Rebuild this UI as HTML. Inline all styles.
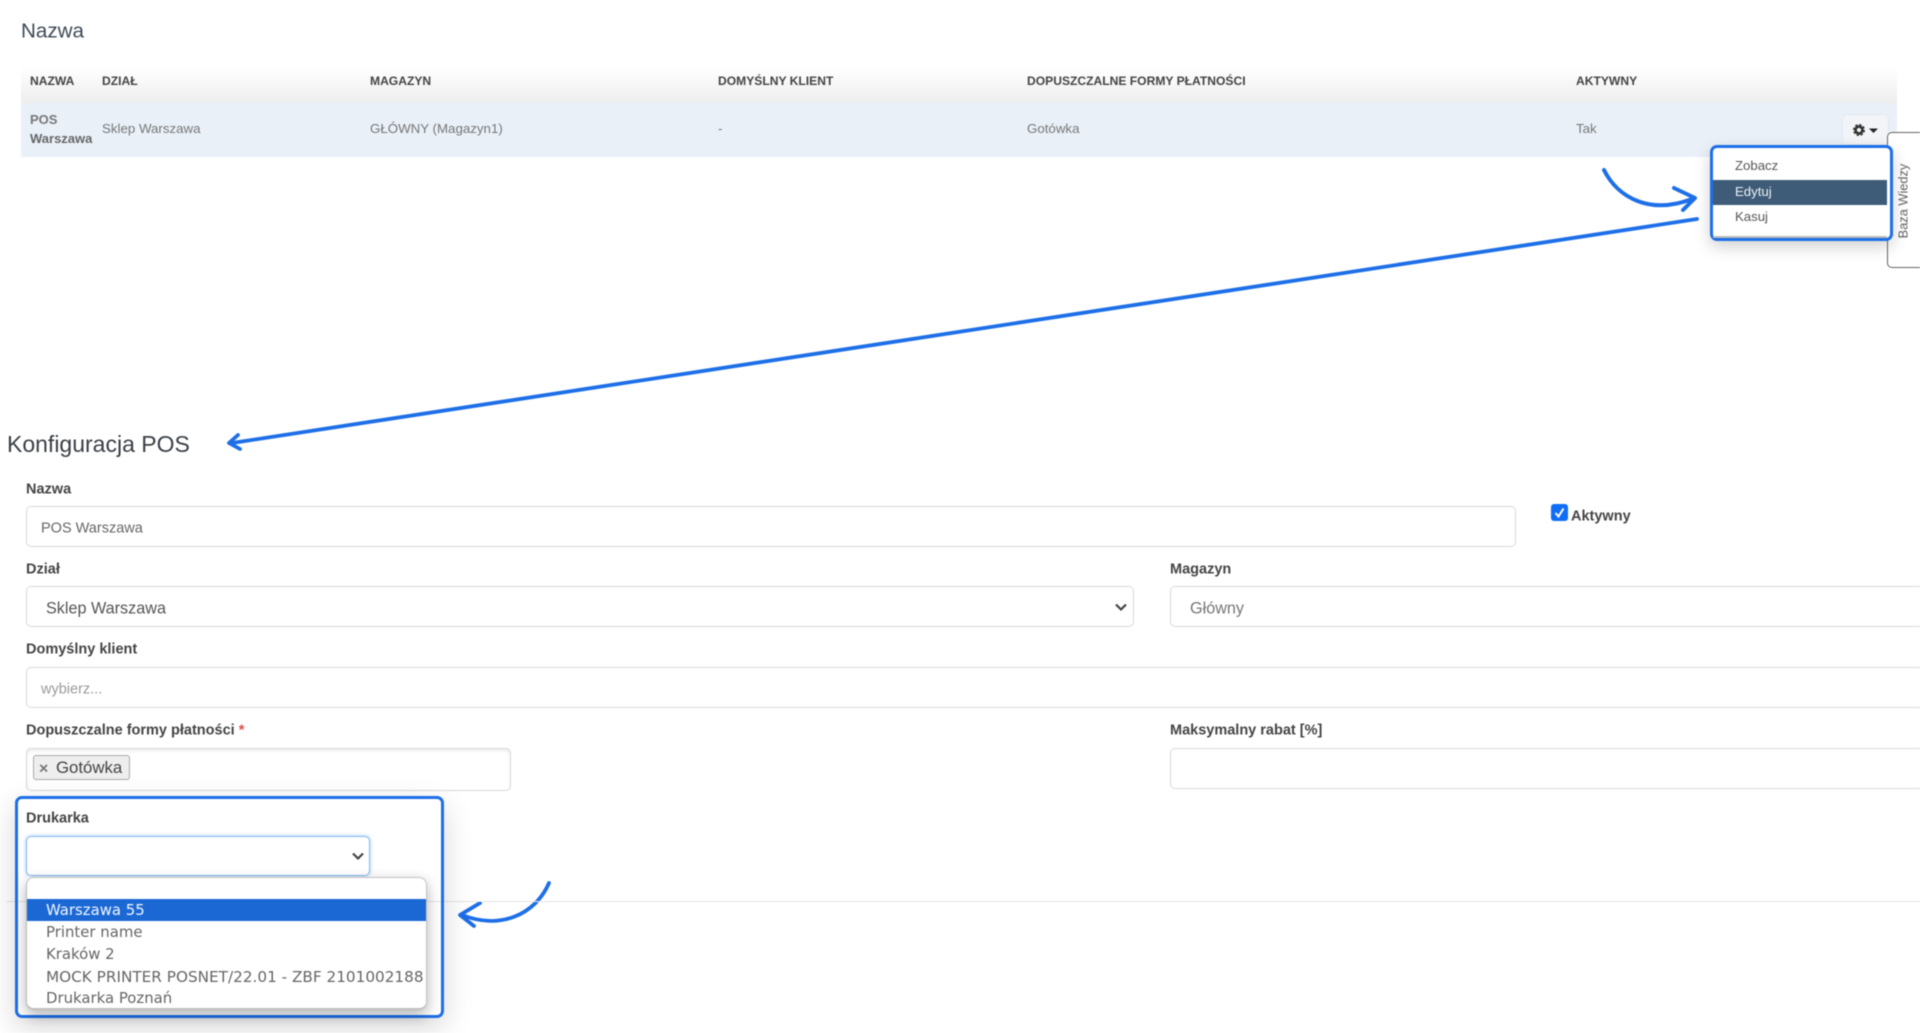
<!DOCTYPE html>
<html lang="pl">
<head>
<meta charset="utf-8">
<title>Konfiguracja POS</title>
<style>
html,body{margin:0;padding:0;background:#fff;width:1920px;height:1033px;overflow:hidden}
#p{position:relative;width:1920px;height:1033px;overflow:hidden;font-family:"Liberation Sans",sans-serif;filter:blur(.4px)}
#p div,#p svg{position:absolute}
.t{white-space:nowrap;transform:translateY(-50%);line-height:1.2}
.h{font-size:12.1px;font-weight:700;color:#444;top:81px}
.c{font-size:13.3px;color:#777;top:129px}
.l{font-size:14.5px;font-weight:700;color:#444}
.i{border:1.5px solid #d9d9d9;border-radius:5px;background:#fff;box-sizing:border-box}
.m{font-size:13.2px;color:#555;left:1735px}
.o{font-family:"DejaVu Sans",sans-serif;font-size:14.9px;color:#666;left:46px}
</style>
</head>
<body>
<div id="p">
  <div class="t" style="left:21px;top:32px;font-size:20.6px;color:#3f4a55">Nazwa</div>

  <div style="left:21px;top:67px;width:1876px;height:36px;background:linear-gradient(#fff,#ededed)"></div>
  <div style="left:21px;top:103px;width:1876px;height:54px;background:#e9f0f8"></div>
  <div class="t h" style="left:30px">NAZWA</div>
  <div class="t h" style="left:102px">DZIAŁ</div>
  <div class="t h" style="left:370px">MAGAZYN</div>
  <div class="t h" style="left:718px">DOMYŚLNY KLIENT</div>
  <div class="t h" style="left:1027px">DOPUSZCZALNE FORMY PŁATNOŚCI</div>
  <div class="t h" style="left:1576px">AKTYWNY</div>
  <div class="t" style="left:30px;top:120px;font-size:13px;font-weight:700;color:#777">POS</div>
  <div class="t" style="left:30px;top:139px;font-size:13px;font-weight:700;color:#666">Warszawa</div>
  <div class="t c" style="left:102px">Sklep Warszawa</div>
  <div class="t c" style="left:370px">GŁÓWNY (Magazyn1)</div>
  <div class="t c" style="left:718px">-</div>
  <div class="t c" style="left:1027px">Gotówka</div>
  <div class="t c" style="left:1576px">Tak</div>

  <div style="left:1843px;top:115px;width:45px;height:29px;background:#f2f4f7;border-radius:4px;box-shadow:0 0 2px rgba(0,0,0,.08)"></div>
  <svg style="left:1852px;top:123px" width="28" height="14" viewBox="0 0 28 14">
    <circle cx="7" cy="7" r="3.4" fill="none" stroke="#333" stroke-width="2.6"/>
    <circle cx="7" cy="7" r="5.2" fill="none" stroke="#333" stroke-width="1.6" stroke-dasharray="2.4 1.68"/>
    <path d="M17 5.5h9l-4.5 4.5z" fill="#222"/>
  </svg>

  <div style="left:1887px;top:132px;width:50px;height:136px;box-sizing:border-box;border:1.5px solid #666;border-radius:5px;background:#fff"></div>
  <div class="t" style="left:1903px;top:201px;font-size:12.8px;color:#666;transform:translate(-50%,-50%) rotate(-90deg)">Baza Wiedzy</div>

  <div style="left:1710px;top:145px;width:183px;height:96px;box-sizing:border-box;border:3px solid #1d6fe8;border-radius:7px;background:#fff;box-shadow:0 6px 16px rgba(0,0,0,.18)"></div>
  <div style="left:1713px;top:180px;width:174px;height:25px;background:#3e5c78"></div>
  <div style="left:1713px;top:236px;width:174px;height:1.5px;background:#bbb"></div>
  <div class="t m" style="top:166px">Zobacz</div>
  <div class="t m" style="top:192px;color:#eef2f6">Edytuj</div>
  <div class="t m" style="top:217px">Kasuj</div>

  <svg style="left:0;top:0" width="1920" height="1033" viewBox="0 0 1920 1033" fill="none" stroke="#1d6fe8" stroke-linecap="round" stroke-linejoin="round">
    <path d="M1604 170C1618 198 1650 215 1692 199" stroke-width="4"/>
    <path d="M1674 188L1695 198L1683 210" stroke-width="4"/>
    <path d="M1697 219L232 443" stroke-width="3.8"/>
    <path d="M238 435L229 443L240 449" stroke-width="3.8"/>
    <path d="M549 883C535 915 500 930 462 915" stroke-width="3.8"/>
    <path d="M480 903L460 915L474 926" stroke-width="3.8"/>
  </svg>

  <div class="t" style="left:7px;top:445px;font-size:23px;color:#3a3f45">Konfiguracja POS</div>

  <div class="t l" style="left:26px;top:490px">Nazwa</div>
  <div class="i" style="left:26px;top:506px;width:1490px;height:41px"></div>
  <div class="t" style="left:41px;top:528.5px;font-size:14.5px;color:#666">POS Warszawa</div>

  <div style="left:1551px;top:504px;width:17px;height:17px;background:#0f6ef5;border-radius:3px"></div>
  <svg style="left:1551px;top:504px" width="17" height="17" viewBox="0 0 17 17" fill="none"><path d="M4.5 9L7.5 12.5L12.5 4.5" stroke="#fff" stroke-width="2"/></svg>
  <div class="t l" style="left:1571px;top:517px">Aktywny</div>

  <div class="t l" style="left:26px;top:570px">Dział</div>
  <div class="i" style="left:26px;top:586px;width:1108px;height:41px"></div>
  <div class="t" style="left:46px;top:608.5px;font-size:16.2px;color:#555">Sklep Warszawa</div>
  <svg style="left:1114px;top:602px" width="14" height="10" viewBox="0 0 14 10" fill="none"><path d="M2 2.5L7 7.5L12 2.5" stroke="#444" stroke-width="2.2"/></svg>

  <div class="t l" style="left:1170px;top:570px">Magazyn</div>
  <div class="i" style="left:1170px;top:586px;width:770px;height:41px"></div>
  <div class="t" style="left:1190px;top:608.5px;font-size:16.2px;color:#777">Główny</div>

  <div class="t l" style="left:26px;top:650px">Domyślny klient</div>
  <div class="i" style="left:26px;top:667px;width:1914px;height:41px"></div>
  <div class="t" style="left:41px;top:690px;font-size:14.5px;color:#999">wybierz...</div>

  <div class="t l" style="left:26px;top:731px">Dopuszczalne formy płatności <span style="color:#e34a4a">*</span></div>
  <div class="i" style="left:26px;top:748px;width:485px;height:43px;box-shadow:inset 0 2px 3px rgba(0,0,0,.08)"></div>
  <div style="left:33px;top:755px;width:97px;height:25px;box-sizing:border-box;background:#eee;border:1.5px solid #aaa;border-radius:3px"></div>
  <div class="t" style="left:39px;top:769px;font-size:16px;font-weight:700;color:#777">×</div>
  <div class="t" style="left:56px;top:768px;font-size:16.8px;color:#444">Gotówka</div>

  <div class="t l" style="left:1170px;top:731px">Maksymalny rabat [%]</div>
  <div class="i" style="left:1170px;top:748px;width:770px;height:41px"></div>

  <div style="left:7px;top:901px;width:1913px;height:1px;background:#e3e3e3"></div>

  <div style="left:15px;top:796px;width:429px;height:222px;box-sizing:border-box;border:3px solid #1d6fe8;border-radius:7px;box-shadow:0 10px 30px rgba(0,0,0,.16)"></div>
  <div class="t l" style="left:26px;top:819px">Drukarka</div>
  <div style="left:26px;top:836px;width:344px;height:40px;box-sizing:border-box;border:1.5px solid #86b7f0;border-radius:5px;background:#fff;box-shadow:0 0 4px rgba(90,160,240,.55)"></div>
  <svg style="left:351px;top:851px" width="14" height="10" viewBox="0 0 14 10" fill="none"><path d="M2 2.5L7 7.5L12 2.5" stroke="#444" stroke-width="2.2"/></svg>

  <div style="left:26px;top:923px;width:2px;height:24px;background:#5b7a99"></div>
  <div style="left:26px;top:877px;width:401px;height:133px;box-sizing:border-box;background:#fff;border:1px solid #c4c4c4;border-left:1.5px solid #bbb;border-bottom:2px solid #c0c0c0;border-radius:8px;box-shadow:0 5px 14px rgba(0,0,0,.3);overflow:hidden"></div>
  <div style="left:27px;top:899px;width:399px;height:22px;background:#1b68d5"></div>
  <div class="t o" style="top:911px;color:#f2f6fc">Warszawa 55</div>
  <div class="t o" style="top:933px">Printer name</div>
  <div class="t o" style="top:955px">Kraków 2</div>
  <div class="t o" style="top:977px;font-size:15.25px">MOCK PRINTER POSNET/22.01 - ZBF 2101002188</div>
  <div class="t o" style="top:999px">Drukarka Poznań</div>
</div>
</body>
</html>
